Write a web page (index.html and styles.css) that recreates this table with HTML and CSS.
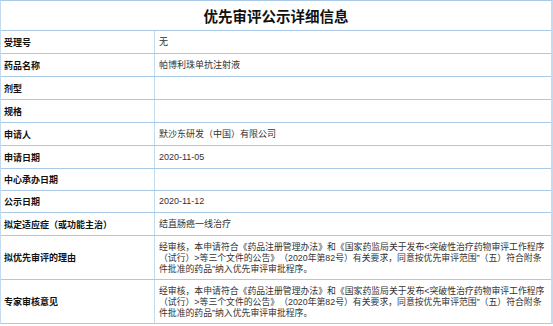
FILE: index.html
```html
<!DOCTYPE html>
<html lang="zh-CN">
<head>
<meta charset="utf-8">
<title>优先审评公示详细信息</title>
<link rel="stylesheet" href="styles.css">
</head>
<body>
<div class="sheet">
  <div class="title">优先审评公示详细信息</div>
  <div class="row h23"><div class="label">受理号</div><div class="value">无</div></div>
  <div class="row h23"><div class="label">药品名称</div><div class="value">帕博利珠单抗注射液</div></div>
  <div class="row h23"><div class="label">剂型</div><div class="value"></div></div>
  <div class="row h23"><div class="label">规格</div><div class="value"></div></div>
  <div class="row h23"><div class="label">申请人</div><div class="value">默沙东研发（中国）有限公司</div></div>
  <div class="row h23"><div class="label">申请日期</div><div class="value">2020-11-05</div></div>
  <div class="row h22"><div class="label">中心承办日期</div><div class="value"></div></div>
  <div class="row h22"><div class="label">公示日期</div><div class="value">2020-11-12</div></div>
  <div class="row h23"><div class="label">拟定适应症（或功能主治）</div><div class="value">结直肠癌一线治疗</div></div>
  <div class="row h44"><div class="label">拟优先审评的理由</div><div class="value long">经审核，本申请符合《药品注册管理办法》和《国家药监局关于发布&lt;突破性治疗药物审评工作程序（试行）&gt;等三个文件的公告》（2020年第82号）有关要求，同意按优先审评范围”（五）符合附条件批准的药品”纳入优先审评审批程序。</div></div>
  <div class="row h44"><div class="label">专家审核意见</div><div class="value long">经审核，本申请符合《药品注册管理办法》和《国家药监局关于发布&lt;突破性治疗药物审评工作程序（试行）&gt;等三个文件的公告》（2020年第82号）有关要求，同意按优先审评范围”（五）符合附条件批准的药品”纳入优先审评审批程序。</div></div>
</div>
</body>
</html>
```
FILE: styles.css
```css
html, body {
  margin: 0;
  padding: 0;
  background: #ffffff;
}
body {
  font-family: "Liberation Sans", "Noto Sans CJK SC", sans-serif;
  color: #333333;
  text-spacing-trim: space-all;
}
.sheet {
  width: 553px;
  box-sizing: border-box;
  border-top: 1px solid #a9c9e8;
  border-left: 1px solid #c3daf0;
  border-right: 2px solid #c3daf0;
}
.title {
  height: 30px;
  box-sizing: border-box;
  border-bottom: 1px solid #a9c9e8;
  display: flex;
  align-items: center;
  justify-content: center;
  font-size: 14.5px;
  font-weight: bold;
  color: #111111;
  padding-bottom: 1px;
}
.row {
  display: grid;
  grid-template-columns: 154px 1fr;
  box-sizing: border-box;
  border-bottom: 1px solid #a9c9e8;
}
.h23 { height: 23px; }
.h22 { height: 22px; }
.h44 { height: 44px; }
.label {
  border-right: 1px solid #c3daf0;
  display: flex;
  align-items: center;
  padding-left: 3px;
  font-size: 9px;
  font-weight: bold;
  color: #111111;
}
.value {
  display: flex;
  align-items: center;
  padding: 0 2px 0 4px;
  font-size: 9px;
  line-height: 11px;
  color: #333333;
}
.long {
  font-size: 8.85px;
  line-height: 11px;
  padding-top: 2px;
}
```
